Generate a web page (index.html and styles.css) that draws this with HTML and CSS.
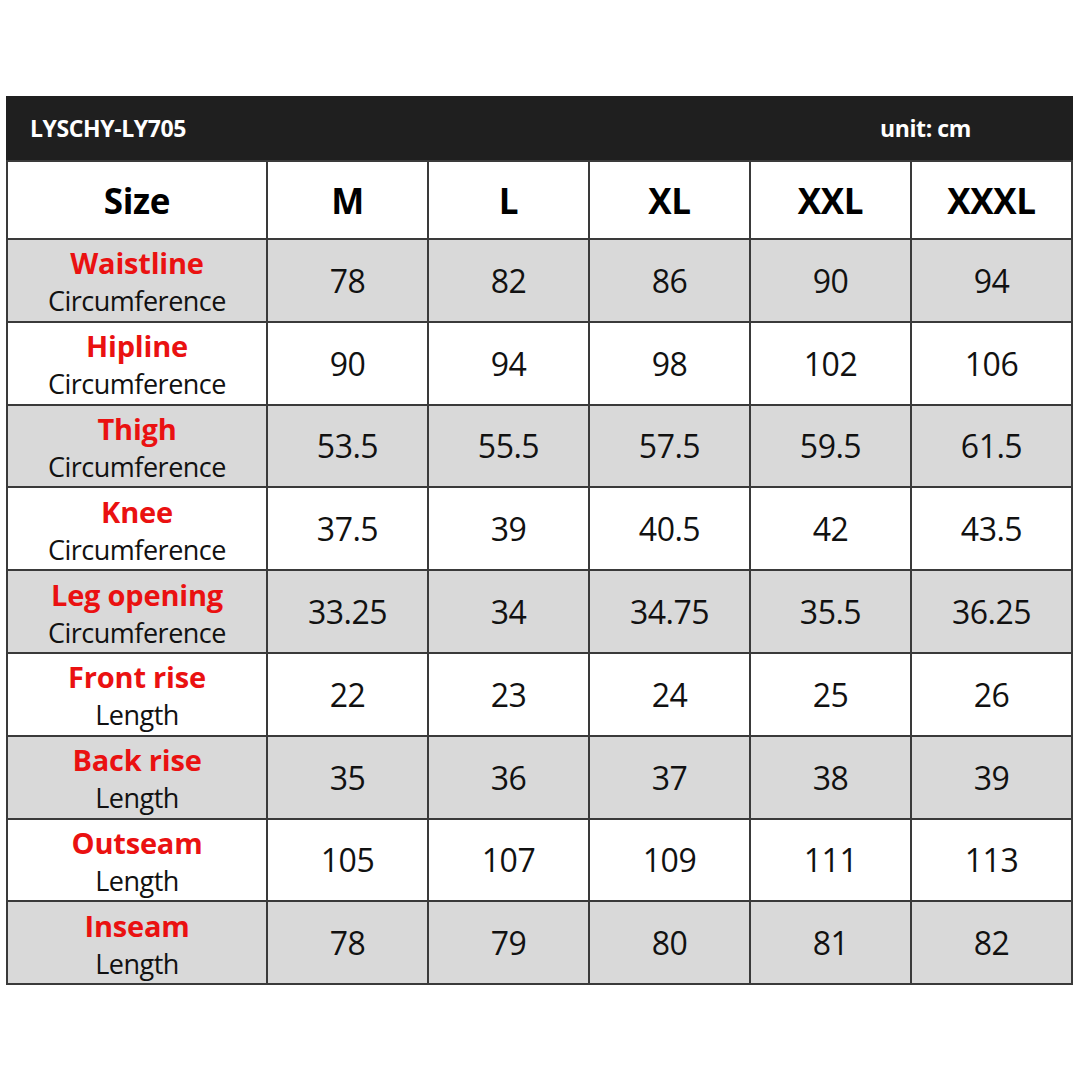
FILE: index.html
```html
<!DOCTYPE html>
<html>
<head>
<meta charset="utf-8">
<link rel="stylesheet" href="styles.css">
</head>
<body>
<div class="chart">
  <div class="bar">
    <span class="model">LYSCHY-LY705</span>
    <span class="unit">unit: cm</span>
  </div>
  <table class="sizes">
    <colgroup><col class="c-label"><col><col><col><col><col></colgroup>
    <thead>
      <tr class="head"><th>Size</th><th>M</th><th>L</th><th>XL</th><th>XXL</th><th>XXXL</th></tr>
    </thead>
    <tbody>
      <tr class="grey"><td class="lbl"><b>Waistline</b><span>Circumference</span></td><td>78</td><td>82</td><td>86</td><td>90</td><td>94</td></tr>
      <tr><td class="lbl"><b>Hipline</b><span>Circumference</span></td><td>90</td><td>94</td><td>98</td><td>102</td><td>106</td></tr>
      <tr class="grey"><td class="lbl"><b>Thigh</b><span>Circumference</span></td><td>53.5</td><td>55.5</td><td>57.5</td><td>59.5</td><td>61.5</td></tr>
      <tr><td class="lbl"><b>Knee</b><span>Circumference</span></td><td>37.5</td><td>39</td><td>40.5</td><td>42</td><td>43.5</td></tr>
      <tr class="grey"><td class="lbl"><b>Leg opening</b><span>Circumference</span></td><td>33.25</td><td>34</td><td>34.75</td><td>35.5</td><td>36.25</td></tr>
      <tr><td class="lbl"><b>Front rise</b><span>Length</span></td><td>22</td><td>23</td><td>24</td><td>25</td><td>26</td></tr>
      <tr class="grey"><td class="lbl"><b>Back rise</b><span>Length</span></td><td>35</td><td>36</td><td>37</td><td>38</td><td>39</td></tr>
      <tr><td class="lbl"><b>Outseam</b><span>Length</span></td><td>105</td><td>107</td><td>109</td><td>111</td><td>113</td></tr>
      <tr class="grey"><td class="lbl"><b>Inseam</b><span>Length</span></td><td>78</td><td>79</td><td>80</td><td>81</td><td>82</td></tr>
    </tbody>
  </table>
</div>
</body>
</html>
```
FILE: styles.css
```css
html, body {
  margin: 0;
  padding: 0;
  background: #ffffff;
}
body {
  font-family: "Open Sans", "Noto Sans", sans-serif;
  color: #111;
}
.chart {
  width: 1067px;
  margin: 96px 0 0 6px;
}
.bar {
  height: 64px;
  background: #1f1f1f;
  color: #fff;
  display: flex;
  align-items: center;
  font-weight: 700;
  font-size: 23px;
  letter-spacing: -0.4px;
}
.model {
  padding-left: 24px;
  flex: 1;
}
.unit {
  width: 193px;
  text-align: left;
}
.sizes {
  width: 1067px;
  border-collapse: collapse;
  table-layout: fixed;
}
.c-label {
  width: 260px;
}
.sizes th, .sizes td {
  border: 2px solid #3a3a3a;
  text-align: center;
  vertical-align: middle;
  padding: 0;
}
.head th {
  height: 76px;
  font-size: 35px;
  font-weight: 700;
  color: #000;
  letter-spacing: -0.3px;
}
.sizes tbody td {
  height: 80.8px;
  font-size: 32px;
  font-weight: 400;
  color: #111;
  letter-spacing: -0.5px;
}
.sizes tbody td.lbl {
  padding-top: 4px;
  box-sizing: border-box;
}
.grey td {
  background: #d9d9d9;
}
.lbl b {
  display: block;
  color: #ea1111;
  font-size: 29px;
  font-weight: 700;
  line-height: 38px;
  letter-spacing: -0.2px;
}
.lbl span {
  display: block;
  font-size: 27px;
  line-height: 38px;
  color: #111;
  letter-spacing: -0.5px;
}
```
